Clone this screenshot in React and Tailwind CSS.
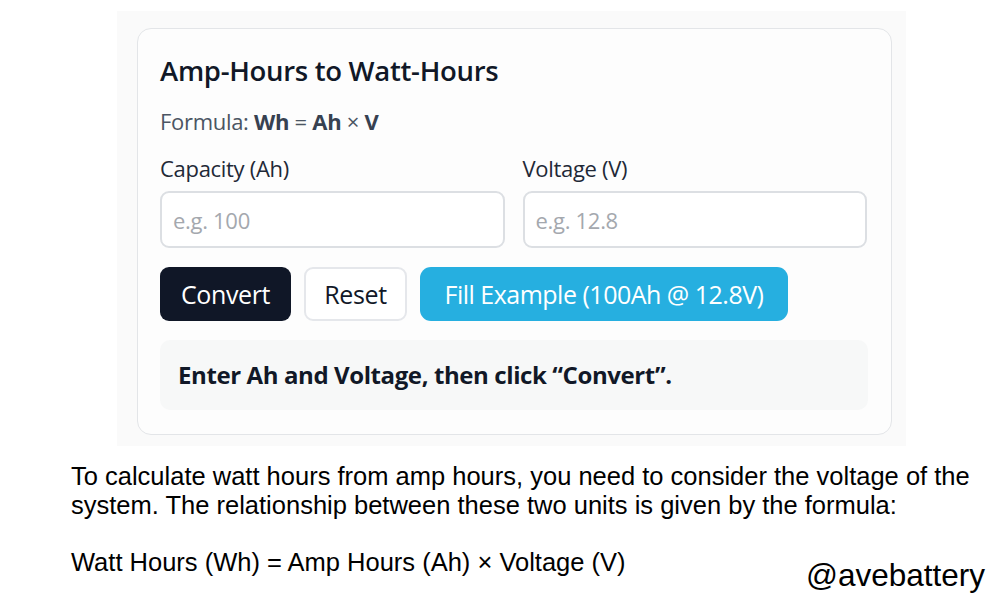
export default function App() {
  return (
    <div className="w-[1000px] h-[600px] bg-white relative overflow-hidden">
      {/* converter widget */}
      <div className="ml-[117px] pt-[11px]">
        <div className="w-[789px] h-[435px] bg-[#fafafa] pl-[20px] pt-[17px]">
          <div
            className="w-[755px] h-[407px] bg-[#fdfdfd] border border-[#e3e5e8] rounded-[14px] pl-[22px] pr-[22px] pt-[24px]"
            style={{ fontFamily: '"Open Sans", "Noto Sans", sans-serif' }}
          >
            <h2 className="text-[27.5px] font-semibold text-[#111827] leading-[36px] tracking-[-0.3px]">
              Amp-Hours to Watt-Hours
            </h2>
            <p className="mt-[19px] text-[22px] leading-[26px] text-[#4b5563] tracking-[-0.3px]">
              Formula: <b className="font-bold text-[#374151]">Wh</b> = <b className="font-bold text-[#374151]">Ah</b> × <b className="font-bold text-[#374151]">V</b>
            </p>

            <div className="mt-[22px] grid grid-cols-2 gap-[18px] w-[707px]">
              <label className="flex flex-col">
                <span className="text-[22px] leading-[24px] text-[#1f2937] tracking-[-0.3px]">Capacity (Ah)</span>
                <input
                  placeholder="e.g. 100"
                  className="mt-[11px] h-[57px] rounded-[9px] border-2 border-[#dcdfe3] bg-white px-[11px] text-[22px] tracking-[-0.3px] placeholder:text-[#a4a8ae] outline-none"
                />
              </label>
              <label className="flex flex-col">
                <span className="text-[22px] leading-[24px] text-[#1f2937] tracking-[-0.3px]">Voltage (V)</span>
                <input
                  placeholder="e.g. 12.8"
                  className="mt-[11px] h-[57px] rounded-[9px] border-2 border-[#dcdfe3] bg-white px-[11px] text-[22px] tracking-[-0.3px] placeholder:text-[#a4a8ae] outline-none"
                />
              </label>
            </div>

            <div className="mt-[19px] flex gap-[13px]">
              <button className="h-[54px] w-[131px] rounded-[9px] bg-[#101727] text-white text-[25px] leading-[30px] tracking-[-0.4px]">
                Convert
              </button>
              <button className="h-[54px] w-[103px] rounded-[9px] bg-white border-2 border-[#e5e7eb] text-[#111827] text-[25px] leading-[30px] tracking-[-0.4px]">
                Reset
              </button>
              <button className="h-[54px] w-[368px] rounded-[11px] bg-[#26afe0] text-white text-[25px] leading-[30px] tracking-[-0.5px]">
                Fill Example (100Ah @ 12.8V)
              </button>
            </div>

            <div className="mt-[19px] w-[708px] h-[70px] rounded-[10px] bg-[#f7f8f8] flex items-center pl-[18px]">
              <span className="text-[24px] font-bold text-[#111827] tracking-[-0.4px]">
                Enter Ah and Voltage, then click “Convert”.
              </span>
            </div>
          </div>
        </div>
      </div>

      {/* explanation text */}
      <div
        className="pl-[71px] pt-[16px] text-[25.5px] leading-[29px] text-black"
        style={{ fontFamily: '"Liberation Sans", Arial, sans-serif' }}
      >
        <p>To calculate watt hours from amp hours, you need to consider the voltage of the</p>
        <p>system. The relationship between these two units is given by the formula:</p>
        <p className="mt-[28px]">Watt Hours (Wh) = Amp Hours (Ah) × Voltage (V)</p>
      </div>
      <div
        className="absolute left-[806px] top-[555px] text-[31.5px] leading-[40px] text-black"
        style={{ fontFamily: '"Liberation Sans", Arial, sans-serif' }}
      >
        @avebattery
      </div>
    </div>
  )
}
